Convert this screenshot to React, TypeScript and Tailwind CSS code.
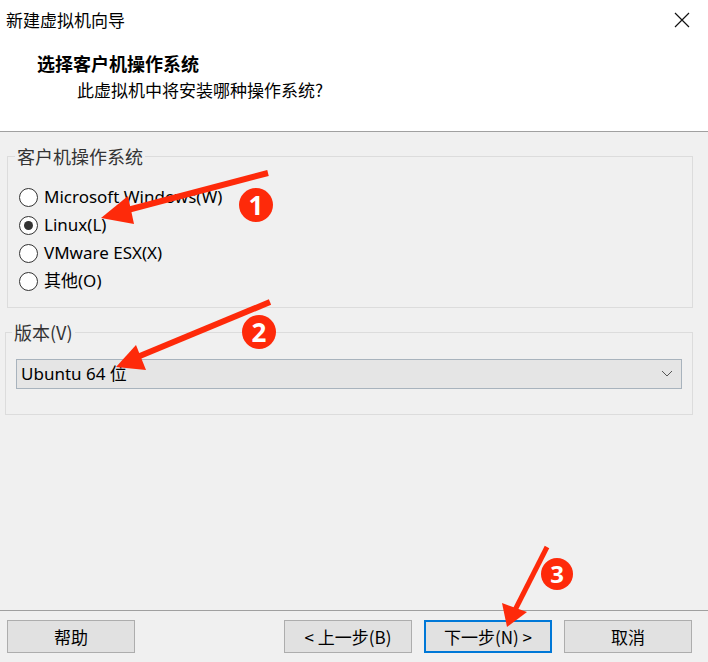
import React from 'react'

const cjk = { fontFamily: '"Noto Sans CJK SC", "Noto Sans", sans-serif' }
const ui = { fontFamily: '"Noto Sans", "Noto Sans CJK SC", sans-serif' }

function Radio({ label, checked }: { label: string; checked?: boolean }) {
  return (
    <div className="flex items-center h-[28px]">
      <span className="w-[19px] h-[19px] rounded-full border border-[#333] bg-white flex items-center justify-center">
        {checked && <span className="w-[9px] h-[9px] rounded-full bg-[#333]" />}
      </span>
      <span className="ml-[6px] text-[17px] text-black" style={ui}>
        {label}
      </span>
    </div>
  )
}

function WinButton({ label, primary }: { label: string; primary?: boolean }) {
  return (
    <button
      className={`w-[128px] h-[33px] bg-[#e1e1e1] text-[17px] text-black ${
        primary ? 'border-2 border-[#0078d7]' : 'border border-[#adadad]'
      }`}
      style={cjk}
    >
      {label}
    </button>
  )
}

function Annotations() {
  const red = '#fe2a0a'
  return (
    <svg className="absolute inset-0 pointer-events-none" width={708} height={662}>
      {/* arrow 1 */}
      <line x1={268} y1={173} x2={120} y2={212} stroke={red} strokeWidth={6} />
      <polygon points="101,218 128,196 134,224" fill={red} />
      <circle cx={256} cy={205} r={17} fill={red} />
      <text x={256} y={215} textAnchor="middle" fill="white" fontSize={26} fontWeight={700} fontFamily="Noto Sans, sans-serif">1</text>
      {/* arrow 2 */}
      <line x1={270} y1={302} x2={135} y2={358} stroke={red} strokeWidth={6} />
      <polygon points="116,367 136,345 146,370" fill={red} />
      <circle cx={259} cy={332} r={17} fill={red} />
      <text x={259} y={342} textAnchor="middle" fill="white" fontSize={26} fontWeight={700} fontFamily="Noto Sans, sans-serif">2</text>
      {/* arrow 3 */}
      <line x1={547} y1={547} x2={515} y2={610} stroke={red} strokeWidth={5} />
      <polygon points="507,627 502,603 527,612" fill={red} />
      <circle cx={557} cy={574} r={16} fill={red} />
      <text x={557} y={583} textAnchor="middle" fill="white" fontSize={24} fontWeight={700} fontFamily="Noto Sans, sans-serif">3</text>
    </svg>
  )
}

export default function App() {
  return (
    <div className="relative w-[708px] h-[662px] bg-[#f0f0f0] overflow-hidden flex flex-col">
      {/* header */}
      <div className="h-[132px] bg-white border-b border-[#a0a0a0] flex flex-col">
        <div className="h-[40px] flex items-center justify-between pl-[6px] pr-[18px]">
          <span className="text-[17px] text-black" style={cjk}>
            新建虚拟机向导
          </span>
          <svg width="16" height="16" viewBox="0 0 16 16">
            <path d="M1 1 L15 15 M15 1 L1 15" stroke="#111" strokeWidth="1.2" />
          </svg>
        </div>
        <div className="pl-[37px] mt-[10px] text-[18px] font-bold text-black leading-[26px]" style={cjk}>
          选择客户机操作系统
        </div>
        <div className="pl-[77px] mt-[2px] text-[17px] text-black leading-[24px]" style={cjk}>
          此虚拟机中将安装哪种操作系统?
        </div>
      </div>

      {/* body */}
      <div className="flex-1 flex flex-col px-[6px]">
        <fieldset className="mt-[12px] border border-[#dcdcdc] px-[11px] pb-[12px] mx-[1px] w-[686px]">
          <legend className="px-[2px] -ml-[4px] text-[18px] leading-[24px] text-[#333]" style={cjk}>
            客户机操作系统
          </legend>
          <div className="mt-[15px] flex flex-col">
            <Radio label="Microsoft Windows(W)" />
            <Radio label="Linux(L)" checked />
            <Radio label="VMware ESX(X)" />
            <Radio label="其他(O)" />
          </div>
        </fieldset>

        <fieldset className="mt-[12px] border border-[#dcdcdc] px-[10px] pb-[25px] w-[688px] -ml-[1px]">
          <legend className="px-[2px] -ml-[4px] text-[18px] leading-[24px] text-[#333]" style={cjk}>
            版本(V)
          </legend>
          <div className="mt-[15px] h-[30px] bg-[#e5e5e5] border border-[#a8b3bd] flex items-center justify-between pl-[4px] pr-[8px]">
            <span className="text-[17px] text-black" style={ui}>
              Ubuntu 64 位
            </span>
            <svg width="12" height="8" viewBox="0 0 12 8">
              <path d="M1 1 L6 6 L11 1" stroke="#555" strokeWidth="1" fill="none" />
            </svg>
          </div>
        </fieldset>
      </div>

      {/* footer */}
      <div className="border-t border-[#a0a0a0] h-[52px] flex items-center px-[7px]">
        <WinButton label="帮助" />
        <div className="flex-1" />
        <div className="flex gap-[12px] mr-[9px]">
          <WinButton label="< 上一步(B)" />
          <WinButton label="下一步(N) >" primary />
          <WinButton label="取消" />
        </div>
      </div>

      <Annotations />
    </div>
  )
}
